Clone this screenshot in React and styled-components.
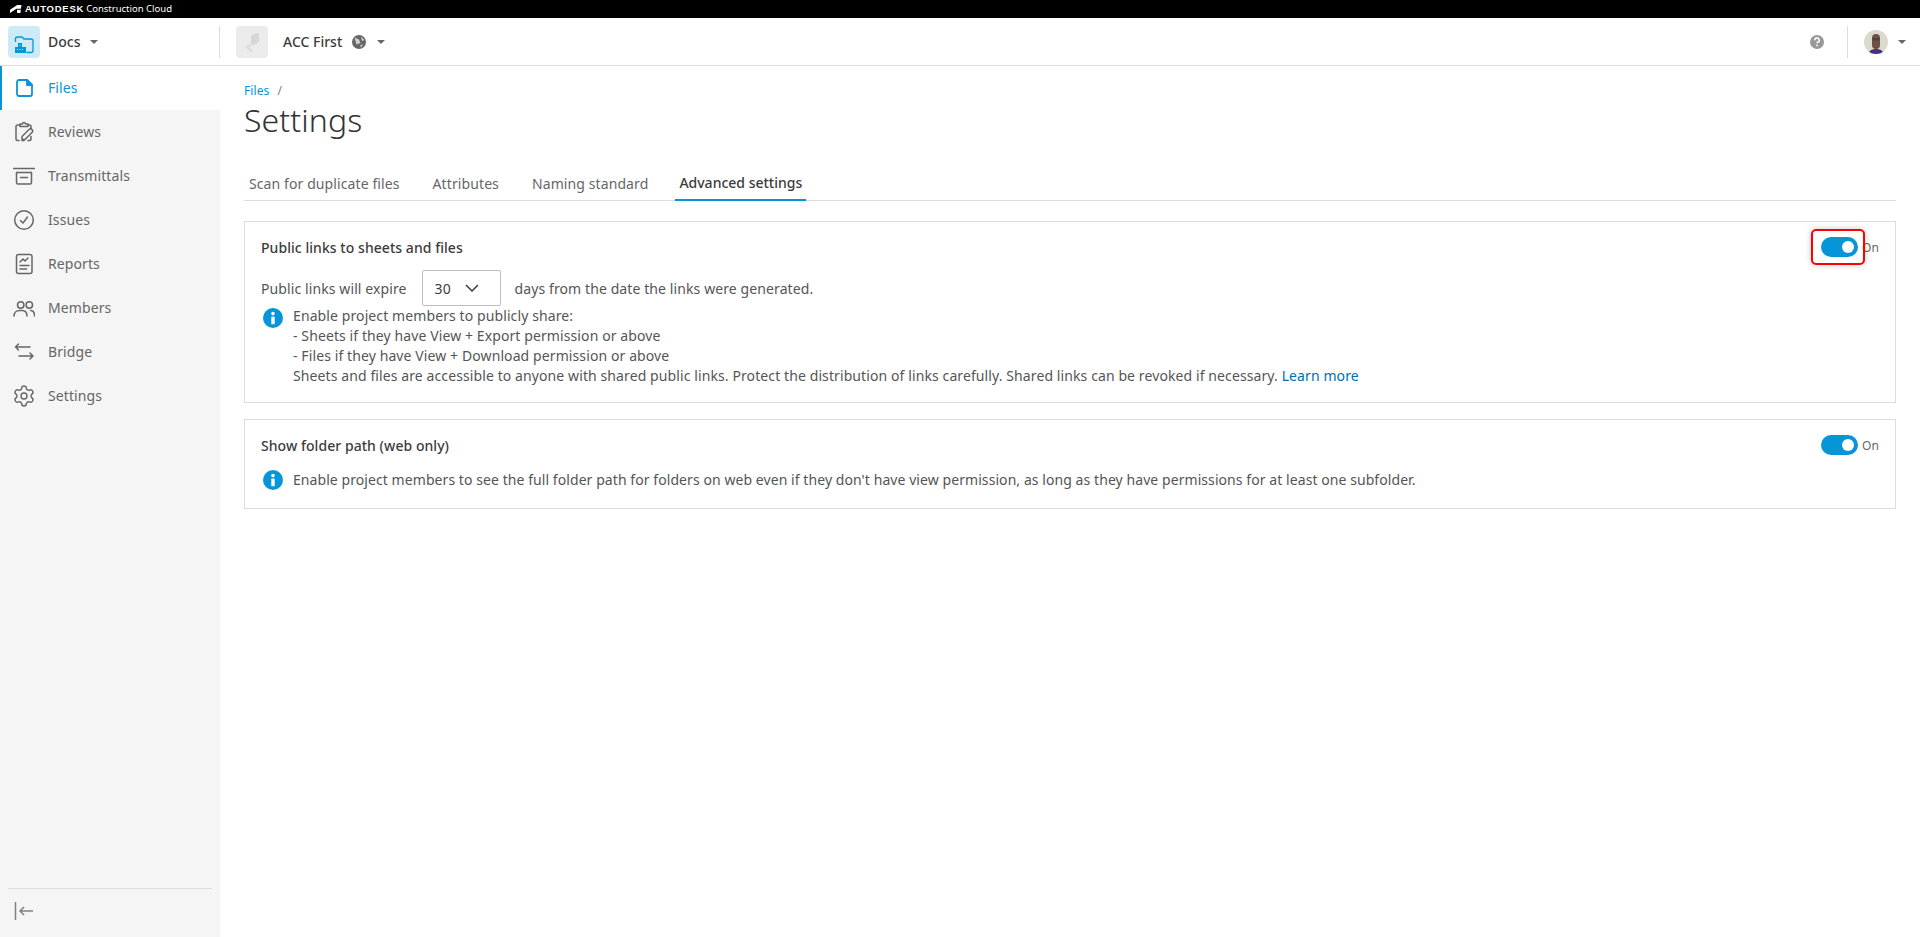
import React from 'react';
import styled, { createGlobalStyle } from 'styled-components';
import { Settings as SettingsGear } from 'lucide-react';

const Global = createGlobalStyle`
  html, body { margin: 0; padding: 0; height: 100%; background: #fff; }
  body { font-family: "Noto Sans", "Liberation Sans", sans-serif; font-size: 14px; color: #3c3c3c; letter-spacing: .1px; }
  #root { height: 937px; overflow: hidden; }
`;
const Page = styled.div`display: flex; flex-direction: column; height: 937px; width: 1920px;`;
const BrandBar = styled.div`
  height: 18px; background: #000; color: #fff; display: flex; align-items: center; padding-left: 10px; gap: 3px; flex: none;
  line-height: 18px;
`;
const BrandWord = styled.span`font-family: "Liberation Sans", sans-serif; font-weight: 700; font-size: 9.5px; letter-spacing: 0.75px;`;
const BrandProduct = styled.span`font-size: 9.5px; margin-left: -1px; letter-spacing: 0;`;
const Header = styled.header`
  height: 47px; flex: none; display: flex; align-items: center; border-bottom: 1px solid #dcdcdc;
`;
const HeaderModule = styled.div`width: 219px; padding-left: 8px; box-sizing: border-box; display: flex; align-items: center;`;
const ModuleIcon = styled.div`
  width: 32px; height: 32px; border-radius: 4px; background: ${p => p.$bg}; display: flex; align-items: center; justify-content: center; flex: none;
`;
const HeaderLabel = styled.span`font-size: 14px; font-weight: 500; color: #3c3c3c; letter-spacing: 0; margin-left: ${p => p.$ml}px;`;
const Caret = styled.span`
  display: inline-block; width: 0; height: 0; border-left: 4px solid transparent; border-right: 4px solid transparent; border-top: 4px solid #666;
  margin-left: ${p => p.$ml}px;
`;
const VDivider = styled.div`width: 1px; height: 32px; background: #dcdcdc; flex: none;`;
const ProjectWrap = styled.div`display: flex; align-items: center; padding-left: 16px; flex: 1;`;
const GlobeIcon = styled.svg`margin-left: 10px; flex: none;`;
const HeaderRight = styled.div`display: flex; align-items: center; padding-right: 14px;`;
const Avatar = styled.div`width: 24px; height: 24px; border-radius: 50%; overflow: hidden; margin-left: 16px; flex: none;`;
const HelpBtn = styled.div`margin-right: 23px; display: flex;`;
const Body = styled.div`flex: 1; display: flex; min-height: 0;`;
const Sidebar = styled.nav`width: 220px; flex: none; background: #f5f5f5; display: flex; flex-direction: column;`;
const NavList = styled.div`flex: 1;`;
const NavItem = styled.div`
  height: 44px; display: flex; align-items: center; box-sizing: border-box; padding-left: ${p => p.$active ? 12 : 14}px;
  font-size: 14px; color: ${p => p.$active ? '#0696d7' : '#666'}; background: ${p => p.$active ? '#fff' : 'transparent'};
  border-left: ${p => p.$active ? '2px solid #0696d7' : 'none'};
`;
const NavIcon = styled.span`
  width: 20px; height: 22px; display: flex; align-items: center; justify-content: center; margin-right: 14px; flex: none;
  svg { flex: none; }
`;
const NavLabel = styled.span`padding-bottom: 2px;`;
const SideFooter = styled.div`
  margin: 0 8px; border-top: 1px solid #dcdcdc; height: 49px; box-sizing: border-box; display: flex; align-items: center; padding: 0 0 4px 6px;
`;
const Main = styled.main`flex: 1; padding: 17px 24px 0; min-width: 0;`;
const Crumbs = styled.div`font-size: 12px; line-height: 16px; color: #808080; display: flex; gap: 8px;`;
const Link = styled.a`color: ${p => p.$c || '#0696d7'}; text-decoration: none;`;
const Title = styled.h1`font-size: 32px; font-weight: 300; line-height: 40px; margin: 1px 0 0; color: #333; letter-spacing: .1px;`;
const Tabs = styled.div`margin-top: 24px; height: 36px; display: flex; border-bottom: 1px solid #dcdcdc; gap: 25px; padding-left: 1px;`;
const Tab = styled.div`
  padding: 2px 4px 0; height: 37px; display: flex; align-items: center; font-size: 14px; font-weight: ${p => p.$active ? 500 : 400};
  color: ${p => p.$active ? '#3c3c3c' : '#666'}; box-sizing: border-box; border-bottom: ${p => p.$active ? '2px solid #0696d7' : 'none'};
  letter-spacing: ${p => p.$active ? 0 : '.1px'}; margin-left: ${p => p.$active ? -2 : 0}px;
`;
const Card = styled.section`border: 1px solid #dcdcdc; padding: 15px 16px ${p => p.$pb}px; margin-top: ${p => p.$mt}px; position: relative;`;
const CardHead = styled.div`display: flex; justify-content: space-between; align-items: center; height: 20px;`;
const CardTitle = styled.div`font-size: 14px; font-weight: 500; color: #3c3c3c; letter-spacing: .05px;`;
const ToggleWrap = styled.div`display: flex; align-items: center; gap: 4px; font-size: 12px; color: #666; position: relative;`;
const Track = styled.div`width: 37px; height: 20px; border-radius: 10px; background: #0696d7; display: flex; align-items: center; justify-content: flex-end; padding-right: 4px; box-sizing: border-box;`;
const Knob = styled.div`width: 12px; height: 12px; border-radius: 50%; background: #fff;`;
const Highlight = styled.div`
  position: absolute; left: -10px; top: -8px; width: 54px; height: 36px; box-sizing: border-box; border: 2px solid #f00; border-radius: 5px; box-shadow: 0 0 6px rgba(0,0,0,.22);
`;
const ExpireRow = styled.div`display: flex; align-items: center; margin-top: 13px; font-size: 14px; color: #555; height: 36px; letter-spacing: .1px;`;
const Select = styled.div`
  width: 79px; height: 36px; border: 1px solid #bdbdbd; border-radius: 2px; margin: 0 14px 0 15px; display: flex; align-items: center; padding-left: 12px; box-sizing: border-box; gap: 14px; color: #3c3c3c;
`;
const InfoRow = styled.div`display: flex; margin-top: ${p => p.$mt}px;`;
const InfoIcon = styled.span`width: 20px; height: 20px; flex: none; margin: ${p => p.$mt}px 10px 0 2px;`;
const InfoText = styled.div`font-size: 14px; line-height: 20px; color: #555; letter-spacing: ${p => p.$ls}px;`;

const Stroke = ({ children, c = '#666', w = 1.5 }) => (
  <svg width="22" height="22" viewBox="0 0 22 22" fill="none" stroke={c} strokeWidth={w} strokeLinecap="round" strokeLinejoin="round">{children}</svg>
);
const Info = () => (
  <svg width="20" height="20" viewBox="0 0 20 20"><circle cx="10" cy="10" r="10" fill="#0696d7" /><circle cx="10" cy="5.600" r="1.800" fill="#fff" /><rect x="8.300" y="8.600" width="3.400" height="7.600" fill="#fff" /></svg>
);
const items = [
  ['Files', <Stroke c="#0696d7" w={1.8}><path d="M6 3h8l5 5v9a2 2 0 0 1-2 2H6a2 2 0 0 1-2-2V5a2 2 0 0 1 2-2z" /><path d="M14 3l5 5h-5z" fill="#0696d7" /></Stroke>],
  ['Reviews', <Stroke><path d="M6.500 4H4.500A1.500 1.500 0 0 0 3 5.500V18a1.500 1.500 0 0 0 1.500 1.500H6M9 19.500h2M15 4h1.500A1.500 1.500 0 0 1 18 5.500V8M7 5.500V3h2.500a1.500 1.500 0 0 1 3 0H15v2.500zM18 15.500V18a1.500 1.500 0 0 1-1.500 1.500H15" /><path d="M9 18.500v-3l7-7a1.600 1.600 0 0 1 3 3l-7 7z" /></Stroke>],
  ['Transmittals', <Stroke><path d="M.500 3.500h21" /><path d="M3.500 7.500h15v10a1.500 1.500 0 0 1-1.500 1.500H5a1.500 1.500 0 0 1-1.500-1.500zM7.500 12.500h7" /></Stroke>],
  ['Issues', <Stroke><circle cx="11" cy="11" r="9.300" /><path d="M7.500 11.500l2.500 2.500 4.500-6" /></Stroke>],
  ['Reports', <Stroke><rect x="3.500" y="1.500" width="15.500" height="19" rx="2" /><path d="M7 9l3-3 2 2 3-3M7 12.500h9M7 16h6.500" /></Stroke>],
  ['Members', <Stroke><circle cx="7.700" cy="8" r="3.200" /><circle cx="16.300" cy="8" r="3.200" /><path d="M1 19c0-3.500 2.500-5.500 5.500-5.500h2.500c3 0 5 2 5 5.500" /><path d="M17.500 13.500c2.500 0 4 2 4 5.500" /></Stroke>],
  ['Bridge', <Stroke><path d="M5.500 3L2.500 6l3 3M2.500 6H17M17 12l3 3-3 3M20 15H6" /></Stroke>],
  ['Settings', <SettingsGear size={24} strokeWidth={1.4} color="#666" />],
];

export default function App() {
  return (
    <Page>
      <Global />
      <BrandBar>
        <svg width="12" height="8" viewBox="0 0 12 8"><path d="M0 8 6.500 3.700h4.400L11.500 0H7.200L0 4.700z M7 4.700h3.800L10.500 8H7z" fill="#fff" /></svg>
        <BrandWord>AUTODESK</BrandWord><BrandProduct>Construction Cloud</BrandProduct>
      </BrandBar>
      <Header>
        <HeaderModule>
          <ModuleIcon $bg="#cdeaf7">
            <svg width="32" height="32" viewBox="0 0 32 32" fill="none"><path d="M7.500 16v-3a2 2 0 0 1 2-2h4.500l2 2h7a2 2 0 0 1 2 2v9.500a2 2 0 0 1-2 2h-4.500" stroke="#0696d7" strokeWidth="1.300" /><path d="M7 27v-6h3v-4h4v4h4v6z" fill="#0696d7" /><path d="M9 23h1v1H9zM11.500 23h1v1h-1zM14 23h1v1h-1zM11.500 19h1v1h-1z" fill="#cdeaf7" /></svg>
          </ModuleIcon>
          <HeaderLabel $ml={8}>Docs</HeaderLabel>
          <Caret $ml={10} />
        </HeaderModule>
        <VDivider />
        <ProjectWrap>
          <ModuleIcon $bg="#ebebeb">
            <svg width="32" height="32" viewBox="0 0 32 32"><path d="M15 10l5-3 3 1v8l-5 3-3-1z" fill="#d6d6d6" /><path d="M16 16l-7 5 6 5 2-1.500-4-3.500 5-3z" fill="#dcdcdc" /></svg>
          </ModuleIcon>
          <HeaderLabel $ml={15}>ACC First</HeaderLabel>
          <GlobeIcon width="14" height="14" viewBox="0 0 14 14"><circle cx="7" cy="7" r="7" fill="#666" /><path d="M2.500 2.500l4.500 2 1.500 3.500-4 1.500zM9 1.500l3.500 3.500-2.500 1zM8 10.500l3.500-1.500-2.500 3.500z" fill="#cfcfcf" /></GlobeIcon>
          <Caret $ml={11} />
        </ProjectWrap>
        <HeaderRight>
          <HelpBtn>
            <svg width="14" height="14" viewBox="0 0 14 14"><circle cx="7" cy="7" r="7" fill="#999" /><path d="M4.800 5.200A2.200 2.200 0 1 1 7.600 7.300c-.5.200-.6.500-.6 1" stroke="#fff" strokeWidth="1.500" fill="none" /><rect x="6.200" y="9.600" width="1.600" height="1.600" fill="#fff" /></svg>
          </HelpBtn>
          <VDivider />
          <Avatar>
            <svg width="24" height="24" viewBox="0 0 24 24"><rect width="24" height="24" fill="#dcd9cf" /><rect x="8" y="4" width="8" height="15" rx="4" fill="#6e5047" /><rect x="8.500" y="8" width="7" height="2.500" fill="#4f413c" /><path d="M4 24c1-4 5-5 8-5s7 1 8 5z" fill="#4a2f7c" /></svg>
          </Avatar>
          <Caret $ml={10} />
        </HeaderRight>
      </Header>
      <Body>
        <Sidebar>
          <NavList>
            {items.map(([label, icon], i) => (
              <NavItem key={label} $active={i === 0}><NavIcon>{icon}</NavIcon><NavLabel>{label}</NavLabel></NavItem>
            ))}
          </NavList>
          <SideFooter>
            <svg width="20" height="20" viewBox="0 0 20 20" fill="none" stroke="#808080" strokeWidth="1.500"><path d="M1.500 1v18M19 10H6M10 6l-4 4 4 4" /></svg>
          </SideFooter>
        </Sidebar>
        <Main>
          <Crumbs><Link>Files</Link><span>/</span></Crumbs>
          <Title>Settings</Title>
          <Tabs>
            <Tab>Scan for duplicate files</Tab>
            <Tab>Attributes</Tab>
            <Tab>Naming standard</Tab>
            <Tab $active>Advanced settings</Tab>
          </Tabs>
          <Card $mt={20} $pb={16}>
            <CardHead>
              <CardTitle>Public links to sheets and files</CardTitle>
              <ToggleWrap><Highlight /><Track><Knob /></Track>On</ToggleWrap>
            </CardHead>
            <ExpireRow>Public links will expire<Select>30<svg width="14" height="8" viewBox="0 0 14 8" fill="none" stroke="#3c3c3c" strokeWidth="1.500"><path d="M1 1l6 6 6-6" /></svg></Select>days from the date the links were generated.</ExpireRow>
            <InfoRow $mt={0}>
              <InfoIcon $mt={2}><Info /></InfoIcon>
              <InfoText $ls={0.1}>
                Enable project members to publicly share:<br />
                - Sheets if they have View + Export permission or above<br />
                - Files if they have View + Download permission or above<br />
                Sheets and files are accessible to anyone with shared public links. Protect the distribution of links carefully. Shared links can be revoked if necessary. <Link $c="#006eaf">Learn more</Link>
              </InfoText>
            </InfoRow>
          </Card>
          <Card $mt={16} $pb={18}>
            <CardHead>
              <CardTitle>Show folder path (web only)</CardTitle>
              <ToggleWrap><Track><Knob /></Track>On</ToggleWrap>
            </CardHead>
            <InfoRow $mt={15}>
              <InfoIcon $mt={0}><Info /></InfoIcon>
              <InfoText $ls={0.07}>Enable project members to see the full folder path for folders on web even if they don't have view permission, as long as they have permissions for at least one subfolder.</InfoText>
            </InfoRow>
          </Card>
        </Main>
      </Body>
    </Page>
  );
}
